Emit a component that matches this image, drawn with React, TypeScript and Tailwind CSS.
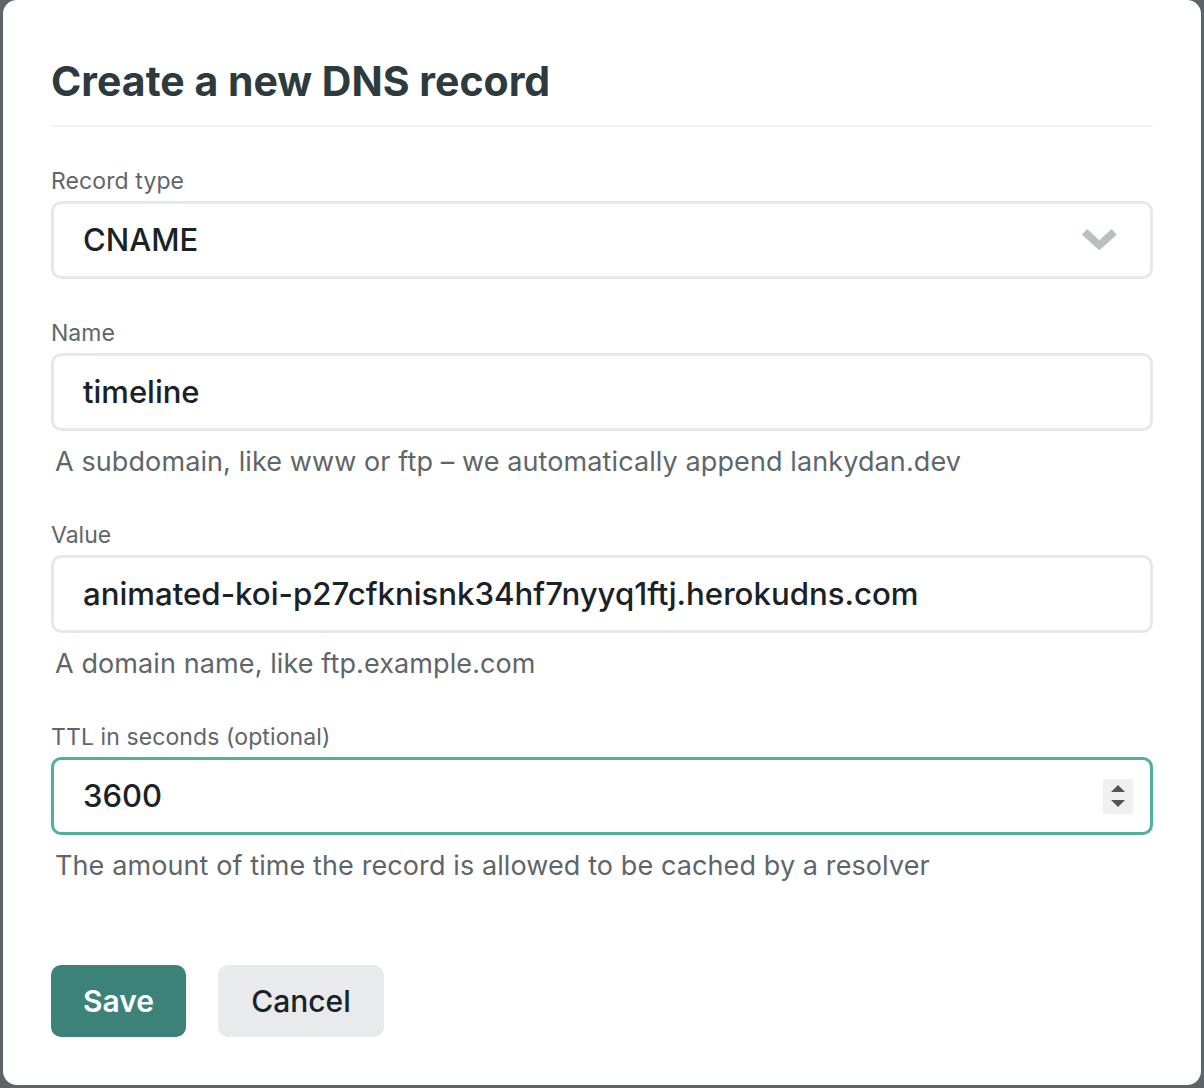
export default function App() {
    const font = { fontFamily: "Inter, 'Noto Sans', sans-serif" }
    return (
        <div className="w-[1204px] h-[1088px] bg-[#5d6568] overflow-hidden" style={font}>
            <div className="ml-[3px] w-[1198px] h-[1085px] bg-white rounded-[14px] px-12 pt-[59px]">
                <h1 className="text-[41px] leading-[44px] font-bold text-[#2d3a3e]">Create a new DNS record</h1>
                <div className="mt-[22px] h-[2px] bg-[#f3f5f5]" />

                <div className="mt-[42px]">
                    <label className="block text-[23px] leading-6 text-[#5f6669] tracking-[0.1px]">Record type</label>
                    <div className="mt-2 h-[78px] border-[3px] border-[#e6e8e9] rounded-[10px] flex items-center justify-between pl-[29px] pr-[33px]">
                        <span className="text-[31px] font-medium text-[#1a2228]">CNAME</span>
                        <svg width="35" height="22" viewBox="0 0 35 22">
                            <polygon points="5,0 17.3,11.3 29.7,0 34.7,5.7 17.3,21.3 0,5.7" fill="#b9bfc1" />
                        </svg>
                    </div>
                </div>

                <div className="mt-[42px]">
                    <label className="block text-[23px] leading-6 text-[#5f6669]">Name</label>
                    <div className="mt-2 h-[78px] border-[3px] border-[#e6e8e9] rounded-[10px] flex items-center pl-[29px]">
                        <span className="text-[31px] font-medium text-[#1a2228]">timeline</span>
                    </div>
                    <p className="mt-[17px] ml-1 text-[27px] leading-7 text-[#5f6669] tracking-[0.1px]">A subdomain, like www or ftp – we automatically append lankydan.dev</p>
                </div>

                <div className="mt-[47px]">
                    <label className="block text-[23px] leading-6 text-[#5f6669]">Value</label>
                    <div className="mt-2 h-[78px] border-[3px] border-[#e6e8e9] rounded-[10px] flex items-center pl-[29px]">
                        <span className="text-[31.2px] font-medium text-[#1a2228]">animated-koi-p27cfknisnk34hf7nyyq1ftj.herokudns.com</span>
                    </div>
                    <p className="mt-[17px] ml-1 text-[27px] leading-7 text-[#5f6669] tracking-[0.1px]">A domain name, like ftp.example.com</p>
                </div>

                <div className="mt-[47px]">
                    <label className="block text-[23px] leading-6 text-[#5f6669] tracking-[0.1px]">TTL in seconds (optional)</label>
                    <div className="mt-2 h-[78px] border-[3px] border-[#52ae9f] rounded-[10px] flex items-center justify-between pl-[29px] pr-[17px]">
                        <span className="text-[31px] font-medium text-[#1a2228]">3600</span>
                        <div className="w-[30px] h-[35px] bg-[#f0f0f0] rounded-[2px] flex flex-col items-center justify-center gap-[8px]">
                            <svg width="14" height="7" viewBox="0 0 14 7"><polygon points="7,0 14,7 0,7" fill="#555" /></svg>
                            <svg width="14" height="7" viewBox="0 0 14 7"><polygon points="0,0 14,0 7,7" fill="#555" /></svg>
                        </div>
                    </div>
                    <p className="mt-[17px] ml-1 text-[27px] leading-7 text-[#5f6669] tracking-[0.1px]">The amount of time the record is allowed to be cached by a resolver</p>
                </div>

                <div className="mt-[85px] flex gap-8">
                    <button className="w-[135px] h-[72px] rounded-[10px] bg-[#3d8279] text-white text-[30px] font-semibold">Save</button>
                    <button className="w-[166px] h-[72px] rounded-[10px] bg-[#e9eaec] text-[#1a2228] text-[30px] font-medium">Cancel</button>
                </div>
            </div>
        </div>
    )
}
